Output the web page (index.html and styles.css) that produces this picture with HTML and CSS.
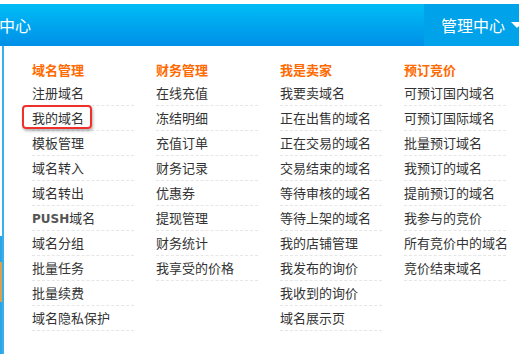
FILE: index.html
```html
<!DOCTYPE html>
<html lang="zh-CN">
<head>
    <meta charset="UTF-8">
    <meta name="viewport" content="width=device-width, initial-scale=1.0">
    <title>管理中心</title>
    <link rel="stylesheet" href="styles.css">
</head>
<body>
    <div class="top-gap"></div>
    <div class="top-bar">
        <div class="top-title">中心</div>
        <div class="top-menu">管理中心<span class="arrow"></span></div>
    </div>
    <div class="drop-wrap">
        <div class="page-behind"></div>
        <div class="drop-panel">
            <div class="menu-col">
                <div class="menu-head">域名管理</div>
                <a class="menu-item">注册域名</a>
                <a class="menu-item mark-wrap">我的域名<span class="mark"></span></a>
                <a class="menu-item">模板管理</a>
                <a class="menu-item">域名转入</a>
                <a class="menu-item">域名转出</a>
                <a class="menu-item"><b class="latin">PUSH</b>域名</a>
                <a class="menu-item">域名分组</a>
                <a class="menu-item">批量任务</a>
                <a class="menu-item">批量续费</a>
                <a class="menu-item">域名隐私保护</a>
            </div>
            <div class="menu-col">
                <div class="menu-head">财务管理</div>
                <a class="menu-item">在线充值</a>
                <a class="menu-item">冻结明细</a>
                <a class="menu-item">充值订单</a>
                <a class="menu-item">财务记录</a>
                <a class="menu-item">优惠券</a>
                <a class="menu-item">提现管理</a>
                <a class="menu-item">财务统计</a>
                <a class="menu-item">我享受的价格</a>
            </div>
            <div class="menu-col">
                <div class="menu-head">我是卖家</div>
                <a class="menu-item">我要卖域名</a>
                <a class="menu-item">正在出售的域名</a>
                <a class="menu-item">正在交易的域名</a>
                <a class="menu-item">交易结束的域名</a>
                <a class="menu-item">等待审核的域名</a>
                <a class="menu-item">等待上架的域名</a>
                <a class="menu-item">我的店铺管理</a>
                <a class="menu-item">我发布的询价</a>
                <a class="menu-item">我收到的询价</a>
                <a class="menu-item">域名展示页</a>
            </div>
            <div class="menu-col">
                <div class="menu-head">预订竞价</div>
                <a class="menu-item">可预订国内域名</a>
                <a class="menu-item">可预订国际域名</a>
                <a class="menu-item">批量预订域名</a>
                <a class="menu-item">我预订的域名</a>
                <a class="menu-item">提前预订的域名</a>
                <a class="menu-item">我参与的竞价</a>
                <a class="menu-item">所有竞价中的域名</a>
                <a class="menu-item">竞价结束域名</a>
            </div>
        </div>
    </div>
</body>
</html>
```

FILE: styles.css
```css
html, body {
    margin: 0;
    padding: 0;
    background: #fff;
    font-family: "Noto Sans CJK SC", "Noto Sans", sans-serif;
    overflow: hidden;
}

.top-gap {
    height: 4px;
}

.top-bar {
    display: flex;
    height: 42px;
    background: linear-gradient(#00bdf5, #008fe8);
    color: #fff;
}

.top-title {
    flex: 1;
    font-size: 16px;
    line-height: 42px;
    margin-left: -1px;
}

.top-menu {
    width: 78px;
    padding-left: 17px;
    background: #00a2ea;
    font-size: 16px;
    line-height: 42px;
    display: flex;
    align-items: center;
    white-space: nowrap;
}

.arrow {
    margin-left: 6px;
    width: 0;
    height: 0;
    border-left: 6px solid transparent;
    border-right: 6px solid transparent;
    border-top: 6px solid #fff;
}

.drop-wrap {
    display: flex;
    height: 308px;
}

.page-behind {
    width: 2px;
    background: linear-gradient(#fff 0, #fff 190px, #2aa6e8 190px, #2aa6e8 216px, #d9a24a 216px, #d9a24a 256px, #2aa6e8 256px);
}

.drop-panel {
    flex: 1;
    display: flex;
    gap: 22px;
    padding: 12px 0 0 28px;
    border-left: 2px solid #3caeea;
}

.menu-col {
    width: 102px;
    display: flex;
    flex-direction: column;
}

.menu-head {
    height: 23px;
    line-height: 24px;
    font-size: 13px;
    font-weight: bold;
    color: #ff6a00;
    white-space: nowrap;
}

.menu-item {
    height: 24px;
    line-height: 24px;
    font-size: 13px;
    color: #333;
    border-bottom: 1px dashed #e6e6e6;
    white-space: nowrap;
}

.latin {
    font-family: "DejaVu Sans", sans-serif;
    font-size: 12px;
    color: #555;
}

.mark-wrap {
    position: relative;
}

.mark {
    position: absolute;
    left: -10px;
    top: -1px;
    width: 66px;
    height: 20px;
    border: 2px solid #f0302a;
    border-radius: 4px;
    box-shadow: 1px 2px 3px rgba(0, 0, 0, 0.3);
}
```
